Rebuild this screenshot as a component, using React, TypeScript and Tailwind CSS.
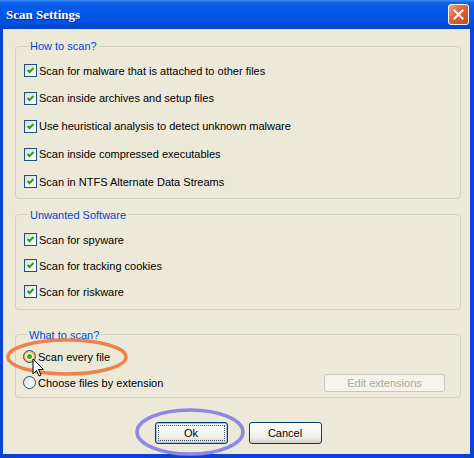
import React from 'react'

const howToScan = [
  'Scan for malware that is attached to other files',
  'Scan inside archives and setup files',
  'Use heuristical analysis to detect unknown malware',
  'Scan inside compressed executables',
  'Scan in NTFS Alternate Data Streams',
]

const unwanted = ['Scan for spyware', 'Scan for tracking cookies', 'Scan for riskware']

function CheckBox() {
  return (
    <span className="w-[13px] h-[13px] shrink-0 border border-[#1c5180] bg-[linear-gradient(135deg,#dcdcd7,#f4f4f0_60%,#ffffff)] flex items-center justify-center">
      <svg width="11" height="11" viewBox="0 0 11 11">
        <path d="M2.5 5 L4.5 7 L8.5 3" stroke="#21a121" strokeWidth="2" fill="none" />
      </svg>
    </span>
  )
}

function Radio({ checked }: { checked?: boolean }) {
  return (
    <span
      className={`w-[13px] h-[13px] shrink-0 rounded-full border border-[#1c5180] flex items-center justify-center ${
        checked
          ? 'bg-[radial-gradient(circle,#ffffff_35%,#f8c86a_55%,#e9a43a_100%)]'
          : 'bg-[linear-gradient(135deg,#dcdcd7,#ffffff)]'
      }`}
    >
      {checked && <span className="w-[5px] h-[5px] rounded-full bg-[#3aa63a]" />}
    </span>
  )
}

function Group({
  title,
  className,
  children,
}: {
  title: string
  className: string
  children: React.ReactNode
}) {
  return (
    <fieldset className={`border border-[#d0d0bf] rounded-[4px] ${className}`}>
      <legend className="ml-[4px] px-[2px] text-[11px] leading-[14px] text-[#0046d5]">{title}</legend>
      {children}
    </fieldset>
  )
}

export default function App() {
  return (
    <div className="relative w-[474px] h-[458px] bg-[#0843d6] flex flex-col font-['Liberation_Sans',Arial,sans-serif] text-[11px] text-black select-none">
      {/* title bar */}
      <div className="h-[29px] shrink-0 flex items-center justify-between pl-[6px] pr-[5px] bg-[linear-gradient(to_bottom,#3d8cf5_0%,#0b5fe6_10%,#0057e8_45%,#0051e0_80%,#0042c4_100%)]">
        <span className="font-['Liberation_Serif',serif] font-bold text-[13px] text-white [text-shadow:1px_1px_0_#0a2a8c]">
          Scan Settings
        </span>
        <button className="w-[21px] h-[21px] rounded-[3px] border border-white bg-[linear-gradient(135deg,#f3a586_0%,#e0673f_40%,#c9461f_100%)] flex items-center justify-center">
          <svg width="11" height="11" viewBox="0 0 11 11">
            <path d="M1.5 1.5 L9.5 9.5 M9.5 1.5 L1.5 9.5" stroke="white" strokeWidth="2" strokeLinecap="square" />
          </svg>
        </button>
      </div>

      {/* dialog body */}
      <div className="flex-1 ml-[3px] mr-[4px] mb-[4px] bg-[#ece9d8] pl-[12px] pr-[9px] flex flex-col">
        <Group title="How to scan?" className="mt-[10px] pt-[4px] pb-[2px] pl-[8px]">
          {howToScan.map((label) => (
            <div key={label} className="h-[27.75px] flex items-center gap-[2px]">
              <CheckBox />
              <span>{label}</span>
            </div>
          ))}
        </Group>

        <Group title="Unwanted Software" className="mt-[9px] pt-[5px] pb-[4px] pl-[8px]">
          {unwanted.map((label) => (
            <div key={label} className="h-[26px] flex items-center gap-[2px]">
              <CheckBox />
              <span>{label}</span>
            </div>
          ))}
        </Group>

        <Group title="What to scan?" className="mt-[18px] pt-[2px] pb-[1px] pl-[7px] pr-[15px]">
          <div className="h-[26px] flex items-center gap-[2px]">
            <Radio checked />
            <span>Scan every file</span>
          </div>
          <div className="h-[26px] flex items-center gap-[2px]">
            <Radio />
            <span>Choose files by extension</span>
            <button
              disabled
              className="ml-auto w-[121px] h-[18px] rounded-[3px] border border-[#c9c7ba] bg-[#f5f4ea] text-[#aca899] text-[11px]"
            >
              Edit extensions
            </button>
          </div>
        </Group>

        <div className="mt-[24px] flex justify-center gap-[21px]">
          <button className="w-[73px] h-[22px] rounded-[3px] border border-[#003c74] bg-[linear-gradient(to_bottom,#ffffff,#f0f0ea_70%,#d6d0c5)] p-[2px] shadow-[inset_0_0_0_1px_#a6c3ef]">
            <span className="block w-full h-full border border-dotted border-[#555] leading-[14px] text-[11px]">Ok</span>
          </button>
          <button className="w-[73px] h-[22px] rounded-[3px] border border-[#003c74] bg-[linear-gradient(to_bottom,#ffffff,#f0f0ea_70%,#d6d0c5)] text-[11px]">
            Cancel
          </button>
        </div>
      </div>

      {/* callout marks and pointer drawn on top */}
      <svg className="absolute inset-0 pointer-events-none" width="474" height="458">
        <ellipse cx="67" cy="357" rx="59" ry="17" fill="none" stroke="#ef8248" strokeWidth="3.5" />
        <ellipse cx="190" cy="432" rx="53" ry="22" fill="none" stroke="#8b88e6" strokeWidth="3.5" />
        <path
          d="M33 359 L33 374 L36.5 370.5 L39 376 L41 375 L38.5 369.5 L43.5 369.5 Z"
          fill="white"
          stroke="black"
          strokeWidth="1"
          strokeLinejoin="round"
        />
      </svg>
    </div>
  )
}
